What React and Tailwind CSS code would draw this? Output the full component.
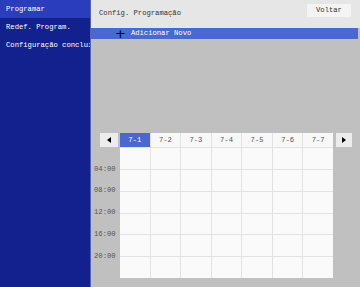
import { useState } from 'react';

const MENU = ['Programar', 'Redef. Program.', 'Configuração concluída'];
const DAYS = ['7-1', '7-2', '7-3', '7-4', '7-5', '7-6', '7-7'];
const HOURS = ['04:00', '08:00', '12:00', '16:00', '20:00'];

function Sidebar() {
  return (
    <div className="w-[90px] shrink-0 bg-[#13218f] text-white">
      {MENU.map((item, i) => (
        <div
          key={item}
          className={`h-[18px] flex items-center pl-[6px] whitespace-nowrap overflow-hidden ${
            i === 0 ? 'bg-[#2a3dbd]' : ''
          }`}
        >
          {item}
        </div>
      ))}
    </div>
  );
}

function Schedule() {
  const [day, setDay] = useState(0);

  return (
    <div className="flex flex-col">
      {/* tabs row */}
      <div className="flex h-[14px]">
        <div className="w-[29px] flex justify-end pr-[2px]">
          <button className="w-[18px] h-[14px] bg-[#ececec] flex items-center justify-center">
            <span className="w-0 h-0 border-y-[3px] border-y-transparent border-r-[4px] border-r-black" />
          </button>
        </div>
        <div className="w-[213px] grid grid-cols-7 bg-[#e2e2e2] gap-px">
          {DAYS.map((d, i) => (
            <button
              key={d}
              onClick={() => setDay(i)}
              className={`flex items-center justify-center ${
                i === day ? 'bg-[#4a68cf] text-white' : 'bg-[#f8f8f8] text-[#555]'
              }`}
            >
              {d}
            </button>
          ))}
        </div>
        <button className="ml-[3px] w-[16px] h-[14px] bg-[#ececec] flex items-center justify-center">
          <span className="w-0 h-0 border-y-[3px] border-y-transparent border-l-[4px] border-l-black" />
        </button>
      </div>

      {/* body */}
      <div className="flex">
        <div className="w-[29px] pt-[11px] pl-[3px] text-[#555]">
          {HOURS.map((h) => (
            <div key={h} className="h-[21.8px] flex items-center">
              {h}
            </div>
          ))}
        </div>
        <div className="w-[213px] h-[131px] grid grid-cols-7 grid-rows-6 gap-px bg-[#e2e2e2] border-t border-[#e2e2e2]">
          {Array.from({ length: 42 }).map((_, i) => (
            <div key={i} className="bg-[#fafafa]" />
          ))}
        </div>
      </div>
    </div>
  );
}

export default function App() {
  return (
    <div className="flex w-[360px] h-[287px] overflow-hidden font-['Liberation_Mono',monospace] text-[7.2px]">
      <Sidebar />
      <div className="flex-1 flex flex-col bg-[#c0c0c0] border-l border-[#5262b8]">
        <div className="h-[28px] bg-[#e6e6e6] flex items-start justify-between pl-[8px] pr-[9px] text-[#333]">
          <span className="mt-[8px]">Config. Programação</span>
          <button className="mt-[4px] w-[44px] h-[13px] bg-[#f4f4f4] text-[#333]">Voltar</button>
        </div>
        <div className="h-[11px] mr-[2px] bg-[#4a68cf] flex items-center text-white">
          <span className="ml-[24px] text-[13px] leading-none text-black font-['DejaVu_Sans',sans-serif]">+</span>
          <span className="ml-[5px]">Adicionar Novo</span>
        </div>
        <div className="mt-[94px]">
          <Schedule />
        </div>
      </div>
    </div>
  );
}
